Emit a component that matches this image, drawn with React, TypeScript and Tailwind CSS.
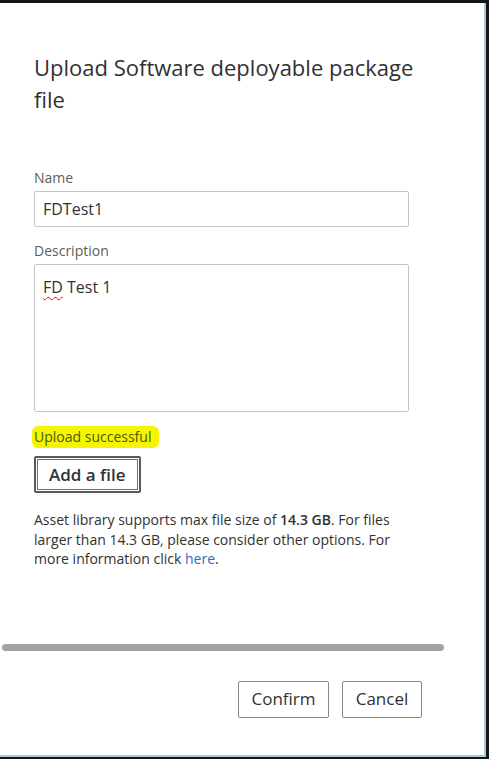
import React from "react";

export default function App() {
  const font = { fontFamily: '"Open Sans", "Noto Sans", sans-serif' };
  return (
    <div className="w-[489px] h-[759px] bg-[#151515] pt-[3px] pr-[3px] pb-[2px]" style={font}>
      <div className="h-full bg-white border-r-2 border-b-2 border-[#a9cbe0] flex flex-col">
        <div className="w-[446px] pl-[34px] pr-[30px] pt-[48px] flex flex-col">
          <h1 className="text-[22px] leading-[32px] text-[#323130] font-normal">
            Upload Software deployable package file
          </h1>
          <div className="mt-[53px] text-[14px] leading-[20px] text-[#605e5c]">Name</div>
          <div className="mt-[3px] w-[375px] h-[36px] border border-[#c8c6c4] rounded-[2px] flex items-center pl-[8px] text-[16px] text-[#323130]">
            FDTest1
          </div>
          <div className="mt-[14px] text-[14px] leading-[20px] text-[#605e5c]">Description</div>
          <div className="mt-[3px] w-[375px] h-[148px] border border-[#c8c6c4] rounded-[2px] pl-[8px] pt-[10px] text-[16px] leading-[24px] text-[#323130]">
            <span className="underline decoration-wavy decoration-[#e81123] decoration-1 underline-offset-[3px]">FD</span> Test 1
          </div>
          <div className="mt-[14px] flex">
            <span className="bg-[#f5f500] rounded-[6px] -ml-[2px] pl-[2px] pr-[8px] py-[1px] text-[14px] leading-[20px] text-[#4c5a12]">
              Upload successful
            </span>
          </div>
          <div className="mt-[8px] flex">
            <div className="border-[2px] border-[#5a5a5a] p-[1px] rounded-[2px]">
              <div className="border border-[#4a78b5] h-[31px] px-[11px] flex items-center text-[17px] font-semibold text-[#323130]">
                Add a file
              </div>
            </div>
          </div>
          <p className="mt-[17px] text-[14px] leading-[19.5px] text-[#323130]">
            Asset library supports max file size of <b className="font-semibold">14.3 GB</b>. For files larger than 14.3 GB, please consider other options. For more information click <span className="text-[#2d6cc0]">here</span>.
          </p>
        </div>
        <div className="mt-[75px] ml-[2px] w-[442px] h-[7px] rounded-full bg-[#a3a3a3]"></div>
        <div className="mt-[30px] flex justify-end gap-[13px] pr-[62px]">
          <div className="w-[91px] h-[37px] border border-[#8a8886] rounded-[2px] flex items-center justify-center text-[17px] text-[#323130]">
            Confirm
          </div>
          <div className="w-[80px] h-[37px] border border-[#8a8886] rounded-[2px] flex items-center justify-center text-[17px] text-[#323130]">
            Cancel
          </div>
        </div>
      </div>
    </div>
  );
}
